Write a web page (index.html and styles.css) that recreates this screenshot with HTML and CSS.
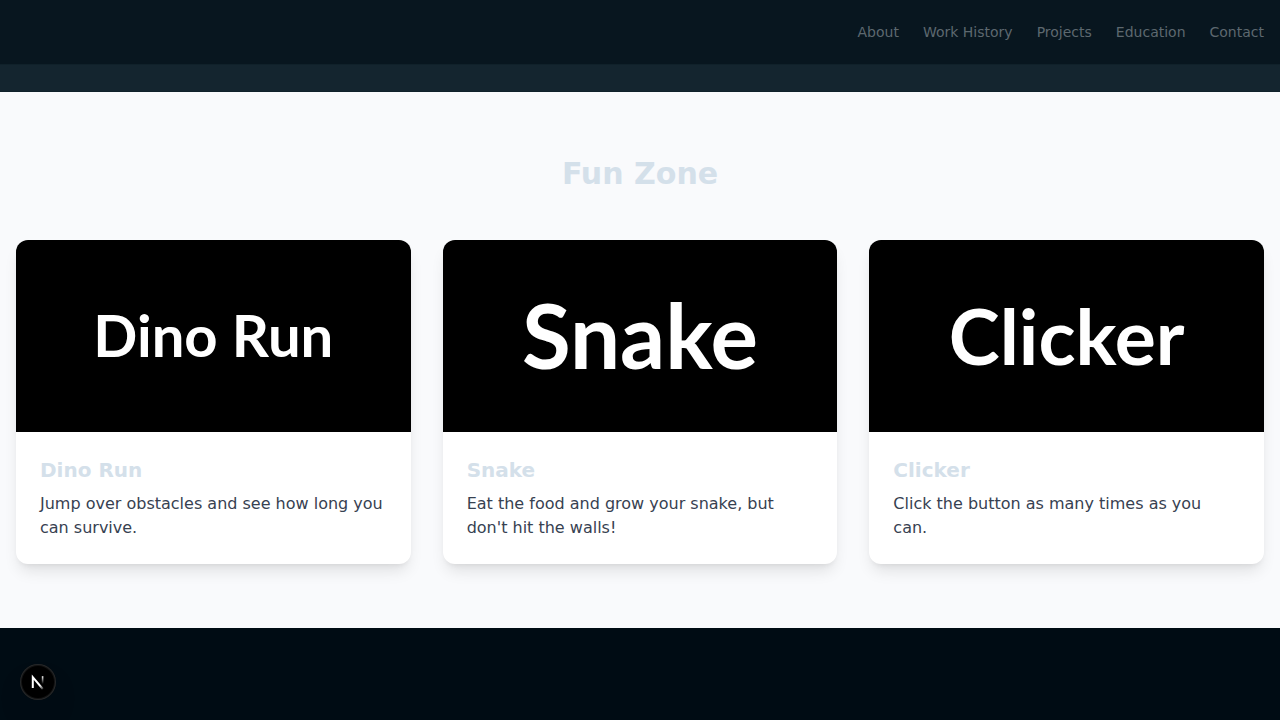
FILE: index.html
```html
<!DOCTYPE html>
<html lang="en">
<head>
<meta charset="utf-8">
<meta name="viewport" content="width=device-width, initial-scale=1">
<title>Fun Zone</title>
<link rel="stylesheet" href="styles.css">
</head>
<body>
<header class="header">
  <nav class="nav">
    <a href="#about">About</a>
    <a href="#work">Work History</a>
    <a href="#projects">Projects</a>
    <a href="#education">Education</a>
    <a href="#contact">Contact</a>
  </nav>
</header>
<div class="strip"></div>
<main class="zone">
  <h1 class="zone-title">Fun Zone</h1>
  <div class="games">
    <article class="card">
      <div class="cover cover-dino">Dino Run</div>
      <div class="card-body">
        <h2 class="card-title">Dino Run</h2>
        <p class="card-text">Jump over obstacles and see how long you can survive.</p>
      </div>
    </article>
    <article class="card">
      <div class="cover cover-snake">Snake</div>
      <div class="card-body">
        <h2 class="card-title">Snake</h2>
        <p class="card-text">Eat the food and grow your snake, but don't hit the walls!</p>
      </div>
    </article>
    <article class="card">
      <div class="cover cover-clicker">Clicker</div>
      <div class="card-body">
        <h2 class="card-title">Clicker</h2>
        <p class="card-text">Click the button as many times as you can.</p>
      </div>
    </article>
  </div>
</main>
<button class="dev-button" type="button" aria-label="Open developer tools">
  <svg width="36" height="36" viewBox="0 0 36 36" fill="none" aria-hidden="true">
    <defs>
      <linearGradient id="diagonal" x1="18" y1="18" x2="24" y2="25" gradientUnits="userSpaceOnUse">
        <stop offset="0.4" stop-color="#fff"/>
        <stop offset="1" stop-color="#fff" stop-opacity="0.1"/>
      </linearGradient>
      <linearGradient id="stem" x1="23" y1="12" x2="23" y2="20" gradientUnits="userSpaceOnUse">
        <stop stop-color="#fff"/>
        <stop offset="1" stop-color="#fff" stop-opacity="0"/>
      </linearGradient>
    </defs>
    <path d="M12.8 24V13.2L22.8 25" stroke="url(#diagonal)" stroke-width="2"/>
    <path d="M22.6 12.2V20" stroke="url(#stem)" stroke-width="1.6"/>
  </svg>
</button>
</body>
</html>
```
FILE: styles.css
```css
* {
  box-sizing: border-box;
}

body {
  margin: 0;
  background: #000c14;
  color: #374151;
  font-family: "DejaVu Sans", sans-serif;
  font-size: 16px;
  line-height: 24px;
}

h1,
h2,
p {
  margin: 0;
}

.header {
  background: #08161f;
  border-bottom: 1px solid #10212a;
}

.nav {
  display: flex;
  align-items: center;
  justify-content: flex-end;
  gap: 24px;
  height: 64px;
  padding: 0 16px;
}

.nav a {
  color: #5d686f;
  font-size: 14px;
  line-height: 20px;
  text-decoration: none;
}

.strip {
  height: 27px;
  background: #14252f;
  border-bottom: 1px solid #10212a;
}

.zone {
  padding: 64px 16px;
  background: #f9fafc;
}

.zone-title {
  margin-bottom: 48px;
  color: #d4e0ea;
  font-size: 30px;
  line-height: 36px;
  text-align: center;
}

.games {
  display: grid;
  grid-template-columns: repeat(3, minmax(0, 1fr));
  gap: 32px;
}

.card {
  overflow: hidden;
  border-radius: 12px;
  background: #fff;
  box-shadow: 0 10px 15px -3px rgba(0, 0, 0, 0.1), 0 4px 6px -4px rgba(0, 0, 0, 0.1);
}

.cover {
  display: flex;
  align-items: center;
  justify-content: center;
  height: 192px;
  padding-bottom: 2px;
  background: #000;
  color: #fff;
  font-family: Lato, sans-serif;
  font-weight: 700;
}

.cover-dino {
  font-size: 58px;
}

.cover-snake {
  font-size: 89px;
}

.cover-clicker {
  font-size: 77px;
}

.card-body {
  padding: 24px;
}

.card-title {
  margin-bottom: 8px;
  color: #d4e0ea;
  font-size: 20px;
  line-height: 28px;
}

.dev-button {
  position: fixed;
  bottom: 20px;
  left: 20px;
  display: flex;
  width: 36px;
  height: 36px;
  padding: 0;
  border: 0;
  border-radius: 50%;
  background: #000;
  box-shadow: inset 0 0 0 1px #25282a, inset 0 0 0 2px #121212, 0 16px 32px -8px rgba(0, 0, 0, 0.24);
  cursor: pointer;
}
```
